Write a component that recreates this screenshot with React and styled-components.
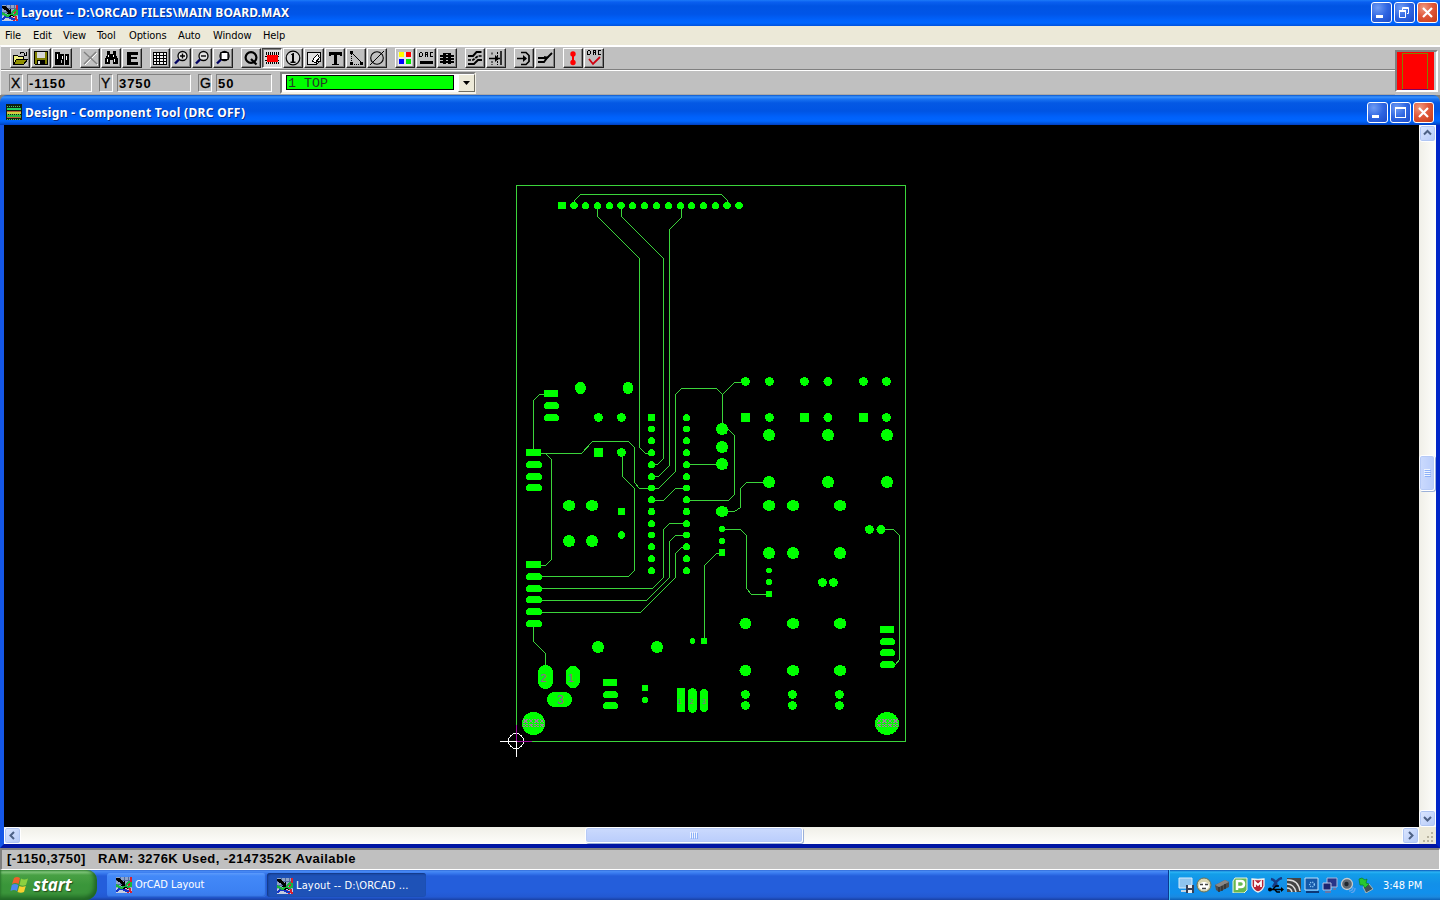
import React from "react";
import styled, { createGlobalStyle, css } from "styled-components";

const Global = createGlobalStyle`
  html, body, #root { height: 100%; }
  body { margin: 0; overflow: hidden; background: #c0c0c0; }
  * { box-sizing: border-box; }
  svg { display: block; flex: none; }
`;

const ui = `"DejaVu Sans Condensed", "DejaVu Sans", sans-serif`;
const system = `"Liberation Sans", Arial, sans-serif`;

const Screen = styled.div`
  width: 1440px;
  height: 900px;
  display: flex;
  flex-direction: column;
  overflow: hidden;
  background: #c0c0c0;
`;

const TitleBar = styled.header`
  height: ${(p) => (p.$inner ? 30 : 26)}px;
  flex: none;
  display: flex;
  align-items: center;
  padding: ${(p) => (p.$inner ? "4px 6px 0 6px" : "0 2px 1px 2px")};
  background: ${(p) =>
    p.$inner
      ? "linear-gradient(#0a56c8 0, #3a93ff 2px, #1a74f2 4px, #0458e4 8px, #0054e3 16px, #0061fb 22px, #0066ff 26px, #0056e0 28px, #003dc0 30px)"
      : "linear-gradient(#1c7af8 0, #0a5ff0 2px, #0054e3 6px, #0055e8 14px, #0062fc 20px, #0066ff 23px, #0052dc 26px)"};
  border-radius: ${(p) => (p.$inner ? "7px 7px 0 0" : "0")};
`;

const TitleText = styled.h1`
  margin: 0 auto 0 3px;
  padding-top: 1px;
  font: bold 12px/18px "Noto Sans", "Open Sans", sans-serif;
  letter-spacing: ${(p) => p.$track || 0}px;
  color: #fff;
  white-space: pre;
  text-shadow: 1px 1px 0 #0a2f8c;
`;

const Controls = styled.div`
  display: flex;
  gap: 2px;
`;

const Control = styled.span`
  width: 21px;
  height: 21px;
  border: 1px solid #fff;
  border-radius: 3px;
  background: ${(p) =>
    p.$close
      ? "radial-gradient(circle at 30% 25%, #f09a80, #e0583a 45%, #c63a14)"
      : "radial-gradient(circle at 30% 25%, #6f9cf4, #2f66e2 50%, #1c4bc8)"};
`;

const MenuBar = styled.nav`
  height: 19px;
  flex: none;
  display: flex;
  padding-left: 5px;
  background: #ece9d8;
  font: 11px/19px ${ui};
  color: #000;
`;

const MenuItem = styled.span`
  width: ${(p) => p.$w}px;
  white-space: nowrap;
  letter-spacing: -0.1px;
`;

const ToolArea = styled.section`
  height: 50px;
  flex: none;
  display: flex;
  border-top: 2px solid #fff;
  border-left: 1px solid #e8e8e8;
  background: #c0c0c0;
`;

const ToolRows = styled.div`
  width: 1394px;
  display: flex;
  flex-direction: column;
`;

const IconRow = styled.div`
  height: 24px;
  display: flex;
  padding: 1px 0 0 9px;
  gap: 8px;
  border-bottom: 1px solid #fff;
  box-shadow: inset 0 -1px 0 #808080;
`;

const IconGroup = styled.div`
  display: flex;
  gap: 1px;
`;

const ToolButton = styled.span`
  width: 20px;
  height: 20px;
  border: 1px solid;
  border-color: ${(p) => (p.$down ? "#404040 #fff #fff #404040" : "#fff #202020 #202020 #fff")};
  box-shadow: ${(p) => (p.$down ? "inset 1px 1px 0 #808080" : "inset -1px -1px 0 #808080")};
  background: ${(p) => (p.$down ? "#dcdcdc" : "#c0c0c0")};
  svg { margin: -1px; }
`;

const FieldRow = styled.div`
  height: 24px;
  display: flex;
  padding: 1px 0 0 8px;
  border-bottom: 1px solid #a8a8a8;
`;

const sunken = css`
  border: 1px solid;
  border-color: #808080 #fff #fff #808080;
`;

const Field = styled.span`
  ${sunken};
  width: ${(p) => p.$w}px;
  height: 18px;
  margin: 2px ${(p) => p.$gap}px 0 0;
  padding-left: 1px;
  font: ${(p) => (p.$label ? "normal" : "bold")} ${(p) => (p.$label ? 14 : 13)}px/17px ${system};
  letter-spacing: ${(p) => (p.$label ? 0 : 0.9)}px;
  color: #000;
  -webkit-text-stroke: ${(p) => (p.$label ? 0.3 : 0)}px #000;
`;

const LayerBox = styled.div`
  width: 196px;
  height: 22px;
  margin-left: 7px;
  display: flex;
  align-items: center;
  padding: 0 2px 1px 4px;
  background: #fff;
  border: 2px solid;
  border-color: #808080 #f4f2e8 #f4f2e8 #808080;
`;

const LayerName = styled.span`
  width: 168px;
  height: 15px;
  margin-right: 4px;
  border: 1px solid #000;
  background: #00ff00;
  padding-left: 1px;
  font: 13.33px/15px "Liberation Mono", monospace;
  color: #263826;
  white-space: pre;
`;

const DropButton = styled.span`
  width: 17px;
  height: 18px;
  margin-right: -3px;
  border: 1px solid;
  border-color: #fff #716f64 #716f64 #fff;
  background: #ece9d8;
  display: flex;
  align-items: center;
  justify-content: center;
`;

const Overview = styled.div`
  width: 43px;
  height: 42px;
  margin-top: 3px;
  padding: 0 3px 0 0;
  border: 2px solid;
  border-color: #808080 #fff #fff #808080;
  background: #c0c0c0;
`;

const DesignWindow = styled.main`
  height: 753px;
  flex: none;
  display: flex;
  flex-direction: column;
  background: #808080;
`;

const Frame = styled.div`
  flex: 1;
  display: grid;
  grid-template: 702px 17px / 1415px 17px;
  border: solid #0831d9;
  border-width: 0 4px 4px 4px;
  border-color: #0a3fe0 #0026c8 #0016a4 #1557e8;
`;

const ScrollTrack = styled.div`
  display: flex;
  flex-direction: ${(p) => (p.$vertical ? "column" : "row")};
  background: ${(p) => (p.$vertical
    ? "linear-gradient(90deg, #f0efe8, #fefefb)"
    : "linear-gradient(#f0efe8, #fefefb)")};
`;

const ScrollArrow = styled.span`
  width: 17px;
  height: 17px;
  flex: none;
  display: flex;
  align-items: center;
  justify-content: center;
  border: 1px solid #fff;
  border-radius: 3px;
  box-shadow: inset 0 0 0 1px #b0c6f4;
  background: linear-gradient(135deg, #dce7ff, #b4c9f8);
`;

const ScrollThumb = styled.span`
  flex: none;
  width: ${(p) => (p.$vertical ? 16 : 218)}px;
  height: ${(p) => (p.$vertical ? 36 : 16)}px;
  margin: ${(p) => (p.$vertical ? "313px 0 auto 0" : "0 auto 0 564px")};
  display: flex;
  align-items: center;
  justify-content: center;
  border: 1px solid #fff;
  border-radius: 3px;
  box-shadow: inset 0 0 0 1px #b6caf6, 1px 1px 0 #9bb0d8;
  background: ${(p) => (p.$vertical
    ? "linear-gradient(90deg, #cbdafd, #b9cdfb)"
    : "linear-gradient(#cbdafd, #bacdfc)")};
`;

const Corner = styled.span`
  background: #ece9d8;
`;

const StatusBar = styled.footer`
  height: 22px;
  flex: none;
  padding-left: 5px;
  border: solid;
  border-width: 2px 1px 1px 2px;
  border-color: #808080 #fff #fff #808080;
  background: #c0c0c0;
  font: bold 13px/17px ${system};
  letter-spacing: ${(p) => p.$track}px;
  color: #000;
  white-space: pre;
`;

const TaskBar = styled.div`
  height: 30px;
  flex: none;
  display: flex;
  background: linear-gradient(#2a62d0 0, #4a8cf4 1px, #3a7cf0 3px, #245edb 6px, #245edb 22px, #2359d2 27px, #1941a5 30px);
`;

const StartButton = styled.div`
  width: 97px;
  height: 30px;
  margin-right: 10px;
  display: flex;
  align-items: center;
  padding-left: 10px;
  gap: 4px;
  border-radius: 0 10px 12px 0;
  background: linear-gradient(#4c9e48 0, #7fc57a 2px, #48a044 5px, #3a963a 15px, #3a943a 23px, #2c7a2c 30px);
  box-shadow: inset -3px -2px 4px #1f6425, inset 1px 0 2px #2d7a2f;
  font: italic bold 17px/28px "Open Sans", "Noto Sans", sans-serif;
  letter-spacing: -0.1px;
  color: #fff;
  text-shadow: 1px 1px 1px #244c1c;
`;

const TaskButton = styled.div`
  width: 159px;
  height: 24px;
  margin: 3px 1px 0 0;
  padding-left: ${(p) => (p.$active ? 10 : 9)}px;
  padding-top: ${(p) => (p.$active ? 1 : 0)}px;
  display: flex;
  align-items: center;
  gap: 3px;
  border-radius: 3px;
  background: ${(p) => (p.$active
    ? "#1e52b7"
    : "linear-gradient(#5c9bfc 0, #4389f8 3px, #3c81f3 18px, #3a7aea 24px)")};
  box-shadow: ${(p) => (p.$active ? "inset 1px 1px 2px #12357f" : "inset -1px -1px 1px #2c66d4")};
  font: 11px/24px ${ui};
  letter-spacing: ${(p) => (p.$active ? 0.15 : -0.05)}px;
  color: #fff;
  white-space: pre;
`;

const Tray = styled.div`
  width: 272px;
  height: 30px;
  margin-left: auto;
  padding: 0 0 0 9px;
  display: flex;
  align-items: center;
  gap: 2px;
  border-left: 1px solid #0a3a90;
  box-shadow: inset 1px 0 0 #3fc0f8;
  background: linear-gradient(#0c59b9 0, #2cb4f4 2px, #139ee9 4px, #1290e9 14px, #1190ec 23px, #1b8ae0 27px, #0c62b8 30px);
`;

const Clock = styled.time`
  margin-left: 7px;
  font: 11px/28px ${ui};
  padding-top: 1px;
  letter-spacing: -0.1px;
  color: #fff;
`;

const WHITE = { fill: "none", stroke: "#fff" };

function ControlGlyph({ kind }) {
  return (
    <svg width="19" height="19" viewBox="0 0 19 19">
      {kind === "min" && <path d="M4 12h7v3H4z" fill="#fff" />}
      {kind === "max" && <path d="M4 5.5h11M4.5 4v11M14.5 4v11M4 14.5h11M4 4.5h11" {...WHITE} />}
      {kind === "restore" && (
        <path d="M4.5 8v6.5h6V8M4 8.5h7M4 7.5h7M7.5 7V4.5h6v6H12M7 5.5h7" {...WHITE} />
      )}
      {kind === "close" && <path d="M5 5l9 9M14 5l-9 9" {...WHITE} strokeWidth="2.2" />}
    </svg>
  );
}

function WindowControls({ middle }) {
  return (
    <Controls>
      <Control><ControlGlyph kind="min" /></Control>
      <Control><ControlGlyph kind={middle} /></Control>
      <Control $close><ControlGlyph kind="close" /></Control>
    </Controls>
  );
}

function AppIcon() {
  return (
    <svg width="16" height="16" viewBox="0 0 16 16" shapeRendering="crispEdges">
      <path d="M0 0h16v16H0z" fill="#8fa4c8" />
      <path d="M0 3.5h16M0 7.5h16M4.5 0v8M8.5 0v8M12.5 0v8" stroke="#536aa0" fill="none" />
      <path d="M0 11h16v5H0z" fill="#c4cce0" />
      <path d="M15 0v4l-2 2v4l2 6M10 12l2 4" stroke="#d82030" strokeWidth="2" fill="none" />
      <path d="M0 15l3-3h4l3 2h3" stroke="#1635c8" strokeWidth="2" fill="none" />
      <path d="M0 8l3 2 3 1 3-2 3 1 3-1V6l-2-1-3 3" stroke="#18b83c" strokeWidth="2" fill="none" />
      <path d="M0 1h3l4 4 2-2v6H4l2-2-6-4z" fill="#000" />
      <path d="M7 12l3-2 2 2" stroke="#000" fill="none" />
    </svg>
  );
}

function DesignIcon() {
  return (
    <svg width="16" height="16" viewBox="0 0 16 16" shapeRendering="crispEdges">
      <path d="M0 0h16v16H0z" fill="#102010" />
      <path d="M1 5h14" stroke="#20d060" strokeWidth="2" />
      <path d="M1 12h14" stroke="#30b840" strokeWidth="2" />
      <path d="M1 9h14" stroke="#d0d040" strokeWidth="2" />
      <path d="M1 7.5h14M1 13.500h14" stroke="#c06030" />
      <path d="M1 2.500h14M1 10.500h14M1 15.500h14" stroke="#58c060" strokeDasharray="1 1" />
    </svg>
  );
}

const K = { fill: "none", stroke: "#000" };
const glass = (
  <>
    <circle cx="11.5" cy="8" r="4.5" fill="#e4e4e4" stroke="#000" strokeWidth="1.3" />
    <path d="M8 11.5l-4 4" stroke="#000060" strokeWidth="2.4" />
  </>
);

const glyphs = {
  open: (
    <>
      <path d="M3.500 16V7.500h4l1 1h5v3" fill="#f0f080" stroke="#000" />
      <path d="M3.500 16.500l3-5h11l-4 5z" fill="#909000" stroke="#000" />
      <path d="M10 5.500c2-2 4-1 5 1M16.500 4v3h-3" {...K} />
    </>
  ),
  save: (
    <>
      <path d="M3.5 3.5h13v13h-12l-1-1z" fill="#808000" stroke="#000" />
      <path d="M6 4h8v6H6z" fill="#d8d8d8" />
      <path d="M6 12h8v4H6z" fill="#000" />
      <path d="M7 13h2v3H7z" fill="#ddd" />
    </>
  ),
  library: (
    <>
      <path d="M3 4h5v13H3zM8 6h4v11H8zM13 6h4v11h-4z" />
      <path d="M5 6h1v5H5zM10 8h1v3h-1zM14 8h1v4h-1z" fill="#fff" />
      <path d="M9 12h1v3H9z" fill="#c0c0c0" />
    </>
  ),
  cut: (
    <>
      <path d="M4 4l13 12M16 4L4 16" stroke="#fff" fill="none" transform="translate(1 1)" />
      <path d="M4 4l13 12M16 4L4 16" stroke="#808080" fill="none" strokeWidth="1.4" />
    </>
  ),
  find: (
    <>
      <path d="M6 3h3v3h3V3h3v4l2 4v5h-5v-4H9v4H4v-5l2-4z" />
      <path d="M7 7h1v2H7zM6 11h1v3H6zM12 7h1v2h-1zM13 11h1v3h-1z" fill="#fff" />
    </>
  ),
  edit: <path d="M5 4h11v3H9v2h6v2H9v3h7v3H5z" />,
  grid: (
    <>
      <path d="M3 4h13v12H3z" fill="#f0f0f0" />
      <path d="M3 4.5h13M3 7.5h13M3 10.5h13M3 13.5h13M3 16.5h14M3.5 4v12M6.5 4v12M9.5 4v12M13.5 4v12M16.5 4v12" {...K} />
    </>
  ),
  zoomIn: <>{glass}<path d="M9 8h5M11.5 5.5v5" {...K} strokeWidth="1.4" /></>,
  zoomOut: <>{glass}<path d="M9 8h5" {...K} strokeWidth="1.4" /></>,
  zoomAll: (
    <>
      {glass}
      <path d="M8 4.5h7v7H8z" fill="#fff" stroke="#000" strokeWidth="1.2" />
    </>
  ),
  query: (
    <>
      <circle cx="10" cy="9.500" r="5.4" {...K} strokeWidth="2.2" />
      <path d="M10 11l5.500 5.500" {...K} strokeWidth="2.2" />
    </>
  ),
  component: (
    <>
      <path d="M4 4.500h13M4 5.500h13M4 6.500h13M4 14.500h13M4 15.500h13" {...K} strokeDasharray="1 1" />
      <path d="M5 7h11v7H5z" fill="#f00" />
      <path d="M3 8.500h2M3 12.500h2M16 8.500h1M16 12.500h1" {...K} />
    </>
  ),
  pin: (
    <>
      <circle cx="10" cy="10" r="6.8" fill="#d8d8d8" stroke="#000" strokeWidth="1.2" />
      <path d="M8 6.500l2-1.500h1v8.500h1.500V15h-5v-1.500H9V7H8z" />
    </>
  ),
  obstacle: (
    <>
      <path d="M3.5 4.5h13v8l-4 4h-9z" fill="#e0e0e0" stroke="#000" />
      <path d="M9.500 10.500l4-4 2 3-4 5-3-1z" fill="#fff" stroke="#000" />
      <path d="M12.500 16v-3h4" {...K} />
    </>
  ),
  text: <path d="M4 4h13v4h-2V7h-3v9h2v1H7v-1h2V7H6v1H4z" />,
  connection: (
    <>
      <path d="M5.500 6v10h10" {...K} strokeDasharray="1 1" />
      <path d="M6 5l10 10" {...K} />
      <path d="M4 3h3v3H4zM4 14h3v3H4zM14 14h3v3h-3z" />
    </>
  ),
  error: (
    <>
      <circle cx="10" cy="10" r="6.300" {...K} strokeWidth="1.1" />
      <path d="M3 17L17 3" {...K} />
    </>
  ),
  color: (
    <>
      <path d="M3 4h14v14H3z" fill="#e8e8e8" />
      <path d="M4 4h5v5H4z" fill="#ff0" />
      <path d="M11 4h5v5h-5z" fill="#f00" />
      <path d="M4 11h5v5H4z" fill="#00f" />
      <path d="M11 11h5v5h-5z" fill="#0e0" />
    </>
  ),
  drc: (
    <>
      <path d="M3.5 5v4M3.5 4.5h2l1 1v2l-1 1h-2M9.500 9V4.500h2v2h-2M11.500 7v2M17 4.500h-2.500v4h2.500" {...K} />
      <path d="M4 13h13v3H4z" />
    </>
  ),
  reconnect: (
    <>
      <path d="M6 5h8v11H6z" />
      <path d="M3 7.500h14M3 10.500h14M3 13.500h14" {...K} strokeWidth="2" />
      <path d="M9 6h2v1H9zM9 9h2v1H9zM9 12h2v1H9zM9 15h2v1H9z" fill="#c0c0c0" />
    </>
  ),
  autopath: (
    <>
      <path d="M3 8h5l3.500-4h5M3 16h6l4-4h4" {...K} strokeWidth="1.900" />
      <path d="M3 12h5l5-4h4" {...K} strokeWidth="1.700" strokeDasharray="3 1" />
    </>
  ),
  shove: (
    <>
      <path d="M15 3v14" {...K} strokeWidth="1.500" />
      <path d="M11.500 4v13M6 4.500v3M6 13v4" {...K} strokeDasharray="2 1" />
      <path d="M3 10.500h11" {...K} strokeWidth="1.500" />
      <path d="M9 7l4 3.500L9 14z" />
    </>
  ),
  edSegment: (
    <>
      <path d="M7 4.500h5l3 3v6l-3 3H7M3 10.500h9" {...K} strokeWidth="1.7" />
      <path d="M9 7l4 3.500L9 14z" />
    </>
  ),
  addRoute: (
    <>
      <path d="M3 10h9l5-5M3 14h6l3-4" {...K} strokeWidth="1.800" />
      <path d="M9 8l5 1-4 4z" />
    </>
  ),
  refresh: (
    <>
      <path d="M10 4v13" stroke="#f00" strokeWidth="2" />
      <circle cx="10" cy="6" r="2.700" fill="#f00" />
      <circle cx="10" cy="14.500" r="2.700" fill="#f00" />
    </>
  ),
  design: (
    <>
      <path d="M3.500 3v4M3.500 2.500h2l1 1v2l-1 1h-2M9.500 7V2.500h2v2h-2M11.500 5v2M17 2.500h-2.500v4h2.500" {...K} />
      <path d="M5 11l4 5 7-7" fill="none" stroke="#d00010" strokeWidth="1.800" shapeRendering="auto" />
    </>
  ),
};

const toolGroups = [
  ["open", "save", "library"],
  ["cut", "find", "edit"],
  ["grid", "zoomIn", "zoomOut", "zoomAll"],
  ["query", "component", "pin", "obstacle", "text", "connection", "error"],
  ["color", "drc", "reconnect"],
  ["autopath", "shove"],
  ["edSegment", "addRoute"],
  ["refresh", "design"],
];

const crisp = new Set(["open", "save", "library", "find", "edit", "grid", "text", "color", "drc", "reconnect", "component", "connection", "design", "obstacle"]);

function Tool({ name }) {
  return (
    <ToolButton $down={name === "component"}>
      <svg width="20" height="20" viewBox="0 0 20 20" shapeRendering={crisp.has(name) ? "crispEdges" : "auto"}>
        {glyphs[name]}
      </svg>
    </ToolButton>
  );
}

const menus = [["File", 28], ["Edit", 30], ["View", 34], ["Tool", 32], ["Options", 49], ["Auto", 35], ["Window", 50], ["Help", 30]];

const fields = [
  ["X", 14, 4, true], ["-1150", 65, 7], ["Y", 14, 4, true], ["3750", 74, 7], ["G", 14, 4, true], ["50", 56, 1],
];

const traces = [
  "574,205 574,200 580,194 721,194 727,200 727,205",
  "597,205 597,216 639,258 639,447 645,453 651,453",
  "621,205 621,216 663,258 663,458 657,464 651,464",
  "681,205 681,217 669,229 669,465 658,476 651,476",
  "533,453 581,453 592,441 628,441 634,447 634,482 639,488 658,488 675,471 675,394 681,388 716,388 722,394 734,382 745,382",
  "722,394 722,429",
  "545,453 551,459 551,559 545,565 540,565",
  "622,453 622,476 634,488 634,570 628,576 540,576",
  "651,500 663,500 675,488 686,488",
  "533,453 533,400 539,394 545,394",
  "686,464 722,464",
  "686,500 728,500 734,494 734,435 728,429 722,429",
  "722,511 734,511 740,507 740,488 746,482 769,482",
  "722,529 740,529 746,535 746,588 751,594 769,594",
  "722,553 716,553 704,565 704,640",
  "881,529 893,529 899,535 899,659 895,664 886,664",
  "686,523 669,523 663,529 663,577 652,588 540,588",
  "686,535 675,535 669,541 669,577 646,600 540,600",
  "686,547 681,547 675,553 675,577 640,612 540,612",
  "533,623 533,641 545,653 545,670",
];

const headerX = [574, 585.5, 597.5, 609.5, 621, 632.5, 644.5, 656.5, 668.5, 680.5, 691.5, 703.5, 715.5, 727, 739];
const dipY = [417.5, 429, 440.5, 452.5, 464.5, 476.5, 488, 499.5, 511.5, 523.5, 535, 546.5, 558.5, 570.5];

const rounds = [
  ...headerX.map((x) => [x, 205.5, x % 1 ? 3.5 : 4, 3.5]),
  ...dipY.slice(1).map((y) => [651.5, y, 3.5, 3.5]),
  ...dipY.map((y) => [686.5, y, 3.5, 3.5]),
  ...[[580.5, 388], [628, 388]].map(([x, y]) => [x, y, 5.5, 6]),
  ...[
    [598.5, 417.5], [621.5, 417.5], [621.5, 452.5],
    [745.5, 381.5], [769.5, 381.5], [804.5, 381.5], [828, 381.5], [863.5, 381.5], [886.5, 381.5],
    [769.5, 417.5], [828, 417.5], [886.5, 417.5],
    [869.5, 529.5], [881, 529.5], [822.5, 582.5], [833.5, 582.5],
    [745.5, 694.5], [792.5, 694.5], [839.5, 694.5], [745.5, 705.5], [792.5, 705.5], [839.5, 705.5],
  ].map(([x, y]) => [x, y, 4.5, 4.5]),
  ...[
    [569, 505.5], [592, 505.5], [569, 541], [592, 541],
    [769, 435], [828, 435], [887, 435], [722, 429], [722, 447], [722, 464],
    [769, 482], [828, 482], [887, 482], [769, 505.5], [793, 505.5], [840, 505.5],
    [722, 511.5], [769, 553], [793, 553], [840, 553],
    [598, 647], [657, 647],
    [745.5, 623.5], [793, 623.5], [840, 623.5], [745.5, 670.5], [793, 670.5], [840, 670.5],
  ].map(([x, y]) => [x, y, 6, y % 1 ? 5.5 : 6]),
  ...[
    [722, 529], [722, 541], [769, 570.5], [769, 582], [692.5, 641], [645, 700],
  ].map(([x, y]) => [x, y, 3, 3]),
  [621.5, 535, 3.5, 4],
  [533.5, 723.5, 11.5, 11.5], [887, 723.5, 12, 11.5],
];

const squares = [
  [558, 202, 8, 7], [648, 414, 7, 7], [544, 390, 14, 7], [526, 449, 15, 7], [526, 561, 15, 7],
  [594, 448, 9, 9], [618, 508, 7, 7], [741, 413, 9, 9], [800, 413, 9, 9], [859, 413, 9, 9],
  [719, 549, 6, 7], [766, 591, 6, 6], [701, 638, 6, 6], [880, 626, 14, 7],
  [603, 679, 14, 7], [642, 685, 6, 6], [677, 688, 8, 24],
];

const oblongs = [
  [544, 402, 15, 7], [544, 414, 15, 7],
  [526, 461, 16, 7], [526, 473, 16, 7], [526, 484, 16, 7],
  [526, 573, 16, 7], [526, 585, 16, 7], [526, 596, 16, 7], [526, 608, 16, 7], [526, 620, 16, 7],
  [880, 638, 15, 7], [880, 649, 15, 7], [880, 661, 15, 7],
  [603, 691, 15, 7], [603, 702, 15, 7],
  [538, 665, 15, 24], [566, 666, 14, 22], [547, 692, 25, 15],
  [688, 688, 9, 25], [700, 689, 8, 23],
];

const labels = [
  ["2", 543.5, 682, 11.5], ["1", 571, 682, 11.5], ["3", 560.5, 703.5, 12],
  ["1", 679.5, 704, 7], ["2", 691.5, 704, 7], ["3", 704, 704, 7],
];

const hatch = (x) =>
  Array.from({ length: 4 }, (_, i) => `M${x + i * 5.5} 719l4 4m0-4l-4 4m0 1l4 3m0-3l-4 3`).join("");

function Board() {
  return (
    <svg width="1415" height="702" viewBox="4 125 1415 702" shapeRendering="crispEdges">
      <rect x="4" y="125" width="1415" height="702" fill="#000" />
      <g transform="translate(.5 .5)" fill="none" stroke="#3bd43b" strokeWidth="1">
        <rect x="516" y="185" width="389" height="556" />
        {traces.map((t) => <polyline key={t} points={t} />)}
      </g>
      <g fill="#00ff00">
        {rounds.map(([x, y, rx, ry], i) => <ellipse key={i} cx={x} cy={y} rx={rx} ry={ry} />)}
        {rounds.filter(([, , rx]) => rx === 6).map(([x, y], i) => (
          <path key={i} d={`M${x - 4.5} ${y - 4.5}h9v9h-9z`} />
        ))}
        {squares.map(([x, y, w, h], i) => <rect key={i} x={x} y={y} width={w} height={h} />)}
        {oblongs.map(([x, y, w, h], i) => (
          <rect key={i} x={x} y={y} width={w} height={h} rx={Math.min(w, h) / 2} />
        ))}
      </g>
      <g fill="#a050a0" fontFamily="Liberation Sans, sans-serif" textAnchor="middle">
        {labels.map(([t, x, y, size]) => <text key={t + x} x={x} y={y} fontSize={size}>{t}</text>)}
      </g>
      <path d={hatch(523.5) + hatch(877)} fill="none" stroke="#9a809a" />
      <g fill="none" stroke="#fff">
        <path d="M500 741.500h24M516.500 733v24" />
        <circle cx="516" cy="741" r="7.500" />
      </g>
      <path d="M516.500 725v16M517 741.500h15" fill="none" stroke="#a010a0" />
    </svg>
  );
}

const arrowPaths = {
  up: "M2 6.500l3.500-3.500L9 6.500",
  down: "M2 4l3.500 3.500L9 4",
  left: "M7 2L3.500 5.500 7 9",
  right: "M4 2l3.500 3.500L4 9",
};

function Arrow({ dir }) {
  return (
    <ScrollArrow>
      <svg width="11" height="11" viewBox="0 0 11 11">
        <path d={arrowPaths[dir]} fill="none" stroke="#4d6185" strokeWidth="2" />
      </svg>
    </ScrollArrow>
  );
}

function WindowsFlag() {
  return (
    <svg width="19" height="18" viewBox="0 0 19 18">
      <path d="M4 2q3-2 6 0L8.500 8q-3-2-6.500 0z" fill="#f0602c" />
      <path d="M11 2.500q3 2 7 0L16 9q-3 1.500-6.500 0z" fill="#8cd040" />
      <path d="M1.800 9q3-2 6.500 0L7 15q-3-2-6.500 0z" fill="#4c88f0" />
      <path d="M9.300 10q3 1.500 6.500 0L14 16q-3 1.500-6.500 0z" fill="#f8d030" />
    </svg>
  );
}

const trayIcons = [
  <><path d="M1 1h13v10H1z" fill="#8ec4ee" stroke="#d8ecfa" /><path d="M3 14h6" stroke="#c0d4e4" strokeWidth="2" /><path d="M8 8h8v8H8z" fill="#344058" /><path d="M10 8h4v3h-4zM10 13h4v3h-4z" fill="#eee" /></>,
  <><circle cx="8" cy="8" r="7" fill="#d8d4b0" stroke="#6d7050" /><ellipse cx="8" cy="9" rx="5" ry="4" fill="#fff" /><path d="M4 7.500h3M9 7.500h3M6 11.500h4" stroke="#444" strokeWidth="1.500" /></>,
  <><path d="M1 8l10-5 4 2v5l-10 5-3-2z" fill="#505050" /><path d="M1 8l10-5 4 2-10 5z" fill="#888" /><path d="M5 10v5M8 9v5M11 7v5" stroke="#222" /></>,
  <><path d="M3 1h12v12l-3 3H1V4z" fill="#68b850" stroke="#e8f4e4" /><path d="M5 13V4h4q3 0 3 3t-3 3H6" fill="none" stroke="#fff" strokeWidth="2.500" /></>,
  <><path d="M2 2q6 1 12 0v7q-2 5-6 6-4-1-6-6z" fill="#b82434" stroke="#eee" strokeWidth="1.300" /><path d="M5 10V5l3 3 3-3v5" fill="none" stroke="#fff" strokeWidth="1.800" /></>,
  <><path d="M3 2q5 1 6 8M14 1Q9 2 5 10" fill="none" stroke="#153c84" strokeWidth="2.500" /><path d="M1 12.500h12M5 12l3-3h3M7 13l2 2h3" fill="none" stroke="#000" strokeWidth="1.300" /><circle cx="2" cy="12.500" r="2" /><path d="M13 10l3 2.500-3 2.500z" /></>,
  <><path d="M1 1h14v14H1z" fill="#444" /><path d="M1 3q11-1 13 11M1 7q7 0 9 8M1 11q4 0 5 4" fill="none" stroke="#ddd" strokeWidth="1.500" /></>,
  <><path d="M1 1h13v12H1z" fill="#1458a8" stroke="#bfe0fa" /><path d="M2 14h13v2H2z" fill="#0c3878" /><circle cx="8" cy="7.500" r="2.300" fill="none" stroke="#8cc8f8" strokeDasharray="1 1" strokeWidth="1.500" /></>,
  <><path d="M5 1h10v9H5z" fill="#283488" stroke="#aab8dc" /><path d="M1 6h8v7H1z" fill="#1c2470" stroke="#b8c4e4" /><path d="M3 15h6M11 12h3" stroke="#6878a8" strokeWidth="2" /></>,
  <><circle cx="7" cy="7" r="5.500" fill="#606870" stroke="#c4ccd0" strokeWidth="1.300" /><circle cx="6.500" cy="7" r="2.200" fill="#202830" /><path d="M9 14q4 0 4-4M11 16q4-1 4-5" fill="none" stroke="#60a4ec" strokeWidth="1.300" /></>,
  <><path d="M5 10l6-3 4 5-7 4z" fill="#405058" stroke="#a8b8b8" /><path d="M1 2l3-1 3 2 2-1-1 4 3 1-4 4-2-3-3 0z" fill="#28c830" stroke="#0c8020" strokeWidth=".700" /></>,
];

export default function App() {
  return (
    <Screen>
      <Global />
      <TitleBar>
        <AppIcon />
        <TitleText $track={0.11}>{"Layout -- D:\\ORCAD FILES\\MAIN BOARD.MAX"}</TitleText>
        <WindowControls middle="restore" />
      </TitleBar>
      <MenuBar>
        {menus.map(([name, w]) => <MenuItem key={name} $w={w}>{name}</MenuItem>)}
      </MenuBar>
      <ToolArea>
        <ToolRows>
          <IconRow>
            {toolGroups.map((names) => (
              <IconGroup key={names[0]}>
                {names.map((name) => <Tool key={name} name={name} />)}
              </IconGroup>
            ))}
          </IconRow>
          <FieldRow>
            {fields.map(([text, w, gap, label]) => (
              <Field key={text} $w={w} $gap={gap} $label={label}>{text}</Field>
            ))}
            <LayerBox>
              <LayerName>1 TOP</LayerName>
              <DropButton>
                <svg width="7" height="4" viewBox="0 0 7 4"><path d="M0 0h7L3.500 4z" /></svg>
              </DropButton>
            </LayerBox>
          </FieldRow>
        </ToolRows>
        <Overview>
          <svg width="37" height="38" viewBox="0 0 37 38" shapeRendering="crispEdges">
            <path d="M0 0h37v38H0z" fill="#f00" />
            <path d="M5.500 37V1.500h25V37" fill="none" stroke="#808000" />
            <path d="M5 37.500h26" stroke="#800060" />
          </svg>
        </Overview>
      </ToolArea>
      <DesignWindow>
        <TitleBar $inner>
          <DesignIcon />
          <TitleText $track={0.3}>Design - Component Tool (DRC OFF)</TitleText>
          <WindowControls middle="max" />
        </TitleBar>
        <Frame>
          <Board />
          <ScrollTrack $vertical>
            <Arrow dir="up" />
            <ScrollThumb $vertical>
              <svg width="7" height="8" viewBox="0 0 7 8" shapeRendering="crispEdges">
                <path d="M0 .5h6M0 2.500h6M0 4.500h6M0 6.500h6" stroke="#eef4fe" />
                <path d="M1 1.500h6M1 3.500h6M1 5.500h6M1 7.500h6" stroke="#8cb0f8" />
              </svg>
            </ScrollThumb>
            <Arrow dir="down" />
          </ScrollTrack>
          <ScrollTrack>
            <Arrow dir="left" />
            <ScrollThumb>
              <svg width="8" height="7" viewBox="0 0 8 7" shapeRendering="crispEdges">
                <path d="M.5 0v6M2.500 0v6M4.500 0v6M6.500 0v6" stroke="#eef4fe" />
                <path d="M1.500 1v6M3.500 1v6M5.500 1v6M7.500 1v6" stroke="#8cb0f8" />
              </svg>
            </ScrollThumb>
            <Arrow dir="right" />
          </ScrollTrack>
          <Corner>
            <svg width="17" height="17" viewBox="0 0 17 17" shapeRendering="crispEdges">
              <path d="M12 5h2v2h-2zM8 9h2v2H8zM12 9h2v2h-2zM4 13h2v2H4zM8 13h2v2H8zM12 13h2v2h-2z" fill="#b8b4a0" />
            </svg>
          </Corner>
        </Frame>
      </DesignWindow>
      <StatusBar $track={0.43}>{"[-1150,3750]   RAM: 3276K Used, -2147352K Available"}</StatusBar>
      <TaskBar>
        <StartButton><WindowsFlag />start</StartButton>
        <TaskButton><AppIcon />OrCAD Layout</TaskButton>
        <TaskButton $active><AppIcon />{"Layout -- D:\\ORCAD ..."}</TaskButton>
        <Tray>
          {trayIcons.map((icon, i) => <svg key={i} width="16" height="16" viewBox="0 0 16 16">{icon}</svg>)}
          <Clock>3:48 PM</Clock>
        </Tray>
      </TaskBar>
    </Screen>
  );
}
